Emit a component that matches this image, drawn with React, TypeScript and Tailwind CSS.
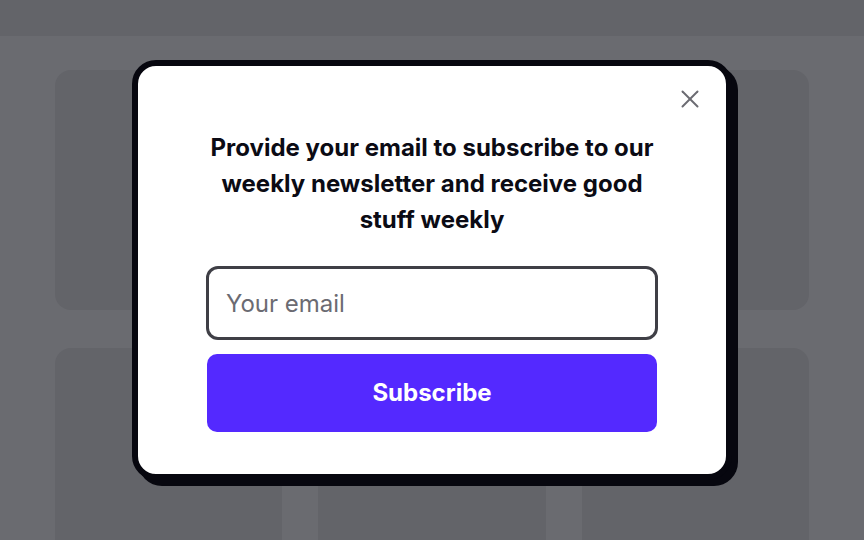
import React from 'react';

const App = () => {
  const cards = [0, 1, 2, 3, 4, 5];

  return (
    <div className="relative w-[864px] h-[540px] overflow-hidden bg-[#6a6b70] font-['Inter',sans-serif]">
      {/* Dimmed page behind the modal */}
      <div className="h-[36px] bg-[#636469]"></div>
      <div className="grid grid-cols-3 gap-x-[36px] gap-y-[38px] pt-[34px] px-[55px]">
        {cards.map((c) => (
          <div key={c} className="h-[240px] rounded-[16px] bg-[#636469]"></div>
        ))}
      </div>

      {/* Modal */}
      <div className="absolute inset-0 flex items-center justify-center">
        <div className="relative w-[600px] h-[420px] bg-white border-[6px] border-[#07070f] rounded-[24px] shadow-[6px_6px_0_#07070f] flex flex-col items-center pt-[64px]">
          <button className="absolute top-[24px] right-[27px] w-[18px] h-[18px] flex items-center justify-center">
            <svg width="18" height="18" viewBox="0 0 18 18" fill="none" stroke="#6b6b72" strokeWidth="2" strokeLinecap="round">
              <path d="M1.5 1.5 16.5 16.5" />
              <path d="M16.5 1.5 1.5 16.5" />
            </svg>
          </button>

          <h2 className="w-[456px] text-center text-[24px] leading-[36px] font-bold text-[#0b0b14]">
            Provide your email to subscribe to our weekly newsletter and receive good stuff weekly
          </h2>

          <div className="w-[452px] mt-[28px] flex flex-col gap-[14px]">
            <input
              type="email"
              placeholder="Your email"
              className="w-full h-[74px] px-[17px] rounded-[12px] border-[3px] border-[#3f3f46] text-[24px] text-[#18181b] placeholder:text-[#6b6b72] outline-none"
            />
            <button className="w-[450px] ml-[1px] h-[78px] rounded-[10px] bg-[#5429ff] text-white text-[24px] font-bold">
              Subscribe
            </button>
          </div>
        </div>
      </div>
    </div>
  );
};

export default App;
